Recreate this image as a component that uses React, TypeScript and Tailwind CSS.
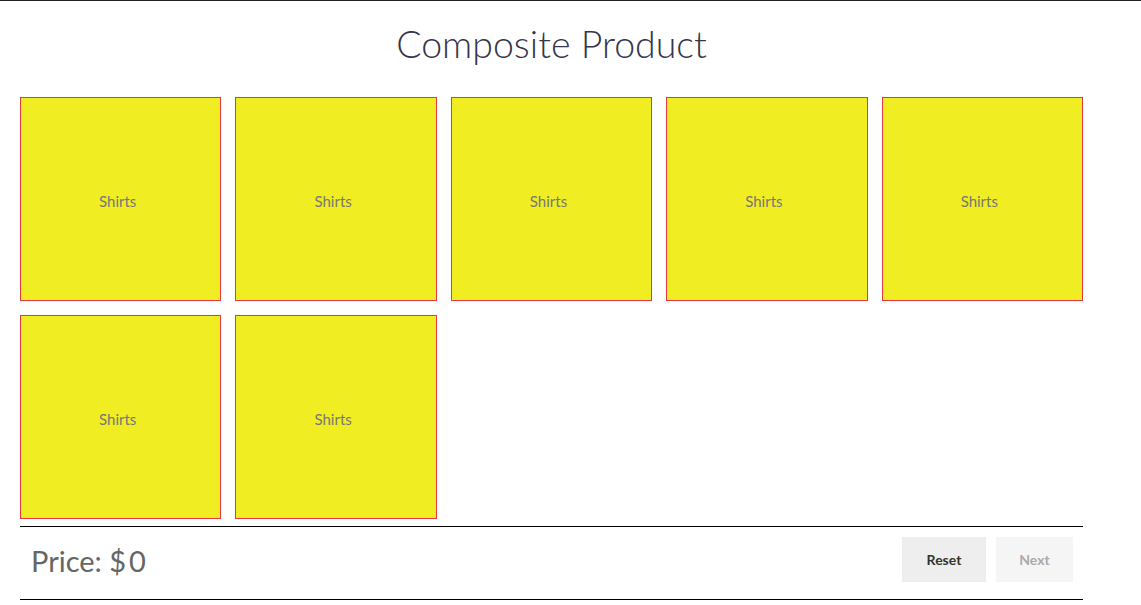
const items = Array.from({ length: 7 }, (_, i) => ({ id: i, label: 'Shirts' }));

export default function App() {
  return (
    <div className="min-h-[605px] border-t border-[#222] bg-white font-['Lato','Liberation_Sans',sans-serif]">
      <div className="ml-[20px] w-[1063px]">
        <h1 className="pt-[21px] text-center text-[37.5px] font-light leading-[44px] text-[#35354d]">
          Composite Product
        </h1>

        <div className="mt-[31px] grid grid-cols-5 gap-x-[14px] gap-y-[14px]">
          {items.map((item) => (
            <div
              key={item.id}
              className="flex h-[204px] items-center justify-center border border-[#e6373f] bg-[#f0ee22] pr-[6px] pt-[4px] text-[15px] text-[#777]"
            >
              {item.label}
            </div>
          ))}
        </div>

        <div className="mt-[7px] flex h-[74px] items-start justify-between border-y border-black">
          <p className="pl-[11px] pt-[16px] text-[29px] leading-[36px] text-[#666]">
            Price: $<span className="ml-[3px]">0</span>
          </p>
          <div className="mt-[10px] flex gap-[10px] pr-[10px]">
            <button className="h-[45px] w-[84px] bg-[#eeeeee] text-[14px] font-bold text-[#333]">
              Reset
            </button>
            <button className="h-[45px] w-[77px] bg-[#f5f5f5] text-[14px] font-bold text-[#aaa]">
              Next
            </button>
          </div>
        </div>
      </div>
    </div>
  );
}
